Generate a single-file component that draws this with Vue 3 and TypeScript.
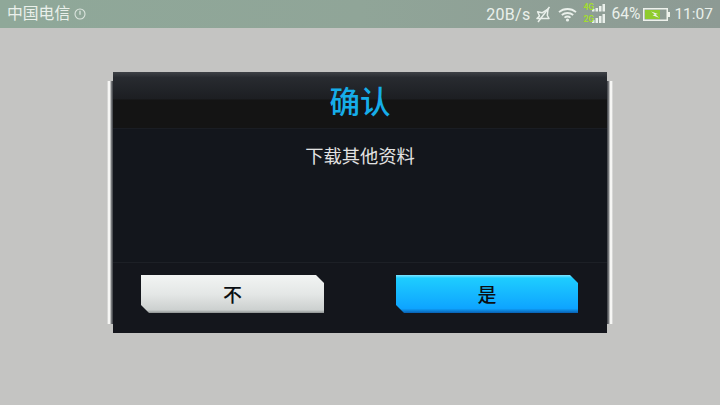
<script setup lang="ts">
const buttons: { label: string; kind: string }[] = [
  { label: '不', kind: 'no' },
  { label: '是', kind: 'yes' },
]
</script>

<template>
  <div class="screen">
    <header class="status">
      <div class="group left">
        <span class="carrier">中国电信</span>
        <svg class="clock" width="12" height="12" viewBox="0 0 12 12" fill="none" stroke="currentColor">
          <circle cx="6" cy="6" r="5" stroke-width="1.1" />
          <path d="M6 2.8V6.8" stroke-width="1.3" />
        </svg>
      </div>
      <div class="group right">
        <span class="speed">20B/s</span>
        <svg class="mute" width="15" height="17" viewBox="0 0 15 17" fill="none" stroke="currentColor" stroke-width="1.5">
          <path d="M1 12.5H13L11.3 9.5L12 3.2L6 6.8L1.6 5.8L3.5 10Z" stroke-linejoin="round" />
          <path d="M2 16L13.5 1" />
        </svg>
        <svg class="wifi" width="19" height="15" viewBox="0 0 19 15" fill="none" stroke="currentColor" stroke-width="1.8">
          <path d="M1 5.2C5.8 .9 13.2 .9 18 5.2" />
          <path d="M3.8 8C7 5.3 12 5.3 15.2 8" />
          <path d="M6.5 10.6C8.2 9.3 10.8 9.3 12.5 10.6" />
          <circle cx="9.5" cy="13" r="1.6" fill="currentColor" stroke="none" />
        </svg>
        <div class="signal">
          <span class="net net-top">4G</span>
          <span class="net net-bottom">2G</span>
          <svg width="22" height="19" viewBox="0 0 22 19" fill="currentColor">
            <rect x="9" y="5" width="2.5" height="2.5" />
            <rect x="12.5" y="4" width="2.5" height="3.5" />
            <rect x="16" y="2" width="2.5" height="5.5" />
            <rect x="19.5" y="0" width="2.5" height="7.5" />
            <rect x="9" y="16" width="2.5" height="3" />
            <rect x="12.5" y="14" width="2.5" height="5" />
            <rect x="16" y="12" width="2.5" height="7" />
            <rect x="19.5" y="10" width="2.5" height="9" />
          </svg>
        </div>
        <span class="percent">64%</span>
        <svg class="battery" width="27" height="13" viewBox="0 0 27 13">
          <rect x=".75" y=".75" width="23.5" height="11.5" fill="none" stroke="#eef2ec" stroke-width="1.5" />
          <rect x="2" y="2" width="15" height="9" fill="#8fcb2e" />
          <rect x="25" y="4" width="2" height="5" fill="#eef2ec" />
          <path d="M8 3.5L15 6L12.5 6.6L16 9.8L9.5 7.3L11.8 6.6Z" fill="#eef2ec" />
        </svg>
        <span class="time">11:07</span>
      </div>
    </header>

    <main class="stage">
      <section class="dialog">
        <i class="rail rail-left"></i>
        <i class="rail rail-right"></i>
        <div class="title-bar">
          <h1 class="title">确认</h1>
        </div>
        <p class="message">下载其他资料</p>
        <footer class="actions">
          <button v-for="b in buttons" :key="b.kind" class="btn" :class="b.kind">{{ b.label }}</button>
        </footer>
      </section>
    </main>
  </div>
</template>

<style>
html, body { margin: 0; background: #c4c4c2; }
</style>

<style scoped>
.screen {
  width: 720px;
  height: 405px;
  overflow: hidden;
  display: flex;
  flex-direction: column;
  background: #c4c4c2;
  font-family: "Roboto", "Noto Sans CJK SC", sans-serif;
}
.status {
  height: 28px;
  flex: none;
  box-sizing: border-box;
  padding: 0 7px;
  display: flex;
  justify-content: space-between;
  align-items: center;
  background: linear-gradient(90deg, #8fa899 0%, #90a598 50%, #8d9a94 100%);
  color: #eaf0eb;
}
.group { display: flex; align-items: center; }
.carrier { font-size: 15.8px; line-height: 28px; }
.clock { margin-left: 4px; opacity: .85; }
.speed { font-size: 16px; letter-spacing: .3px; }
.mute { margin-left: 6px; }
.wifi { margin-left: 7px; }
.signal { position: relative; margin-left: 6px; width: 22px; height: 19px; margin-top: -1px; }
.signal svg { display: block; }
.net {
  position: absolute;
  left: 0;
  font-size: 8.5px;
  line-height: 8px;
  font-weight: 700;
  color: #a3dc30;
}
.net-top { top: -1px; }
.net-bottom { top: 11px; }
.percent { margin-left: 6px; font-size: 15.6px; }
.battery { margin-left: 3px; }
.time { margin-left: 4px; font-size: 15.5px; }

.stage { flex: 1; display: flex; justify-content: center; align-items: flex-start; padding-top: 44px; }
.dialog {
  position: relative;
  width: 494px;
  height: 261px;
  display: flex;
  flex-direction: column;
  background: #13161c;
}
.rail {
  position: absolute;
  top: 9px;
  bottom: 9px;
  width: 6px;
}
.rail-left { left: -6px; background: linear-gradient(90deg, #b8b9b8 0, #f6f6f4 17%, #f6f6f4 50%, #86888a 67%, #3a3d42 100%); }
.rail-right { right: -6px; background: linear-gradient(90deg, #3a3d42 0, #86888a 33%, #f6f6f4 50%, #f6f6f4 83%, #b8b9b8 100%); }
.title-bar {
  height: 56px;
  flex: none;
  display: flex;
  align-items: center;
  justify-content: center;
  background: linear-gradient(180deg, #3f4247 0, #282b30 20%, #1c1e22 96%, #141414 100%) top / 100% 28px no-repeat, #141414;
  border-bottom: 1px solid #1a1d23;
}
.title {
  margin: 0;
  font-size: 30.5px;
  line-height: 56px;
  font-weight: 500;
  color: #16ade9;
  font-family: "Noto Sans CJK SC", sans-serif;
}
.message {
  margin: 15px 0 0;
  text-align: center;
  font-size: 18.3px;
  line-height: 22px;
  color: #e2e2e2;
  font-family: "Noto Sans CJK SC", sans-serif;
  flex: 1;
}
.actions {
  height: 71px;
  flex: none;
  box-sizing: border-box;
  border-top: 1px solid #1d2026;
  padding: 12px 29px 0 28px;
  display: flex;
  justify-content: space-between;
  align-items: flex-start;
  background: #14161c;
}
.btn {
  height: 38px;
  padding: 0;
  border: 0;
  font-size: 19px;
  font-weight: 500;
  line-height: 36px;
  font-family: "Noto Sans CJK SC", sans-serif;
  color: #0b0f12;
  clip-path: polygon(0 0, calc(100% - 8px) 0, 100% 8px, 100% 100%, 8px 100%, 0 calc(100% - 8px));
}
.btn.no { width: 183px; background: linear-gradient(180deg, #f2f4f3 0, #e4e7e6 50%, #ccd0cf 92%, #8e9292 100%); }
.btn.yes { width: 182px; background: linear-gradient(180deg, #7fe4ff 0, #1ecdff 8%, #0ea4ff 88%, #0a5fb0 100%); }
</style>
